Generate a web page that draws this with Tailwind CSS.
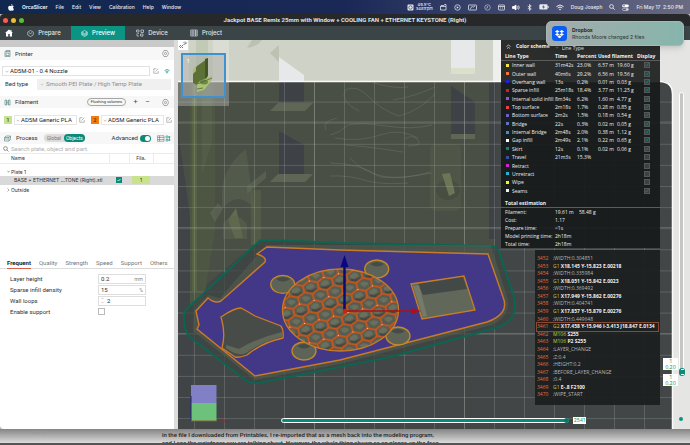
<!DOCTYPE html>
<html lang="en">
<head>
<meta charset="utf-8">
<title>OrcaSlicer</title>
<script src="https://cdn.jsdelivr.net/npm/@tailwindcss/browser@4"></script>
</head>
<body class="flex h-screen min-h-0 flex-col overflow-hidden bg-[#b9b9b9] font-['Inter','Liberation_Sans',sans-serif] text-[5px] leading-[8px] text-[#303030]">

<!-- system menu bar -->
<header class="flex h-[14px] shrink-0 items-center bg-linear-to-r from-[#10284f] via-[#1b2857] via-50% to-[#6a6b83] font-medium text-[#e6e9f2]">
  <nav class="flex items-center gap-[8px] pl-[8px]" aria-label="Menu bar">
    <svg class="h-[7px] w-[6px]" viewBox="0 0 12 14" fill="#f4f6fa"><path d="M8.7 0c.1 1.400-1.200 2.900-2.700 2.900C5.900 1.500 7.200.1 8.700 0zM6.200 3.900c.7 0 1.500-.7 2.800-.7 1 0 2 .5 2.600 1.400-2.300 1.300-1.900 4.600.4 5.500-.5 1.400-1.700 3.600-3 3.600-1 0-1.300-.6-2.500-.6s-1.600.6-2.500.6C2.300 13.700.2 10.400.2 7.500c0-2.800 1.800-4.200 3.500-4.200 1.100 0 1.900.6 2.500.6z"/></svg>
    <a href="#" class="font-bold">OrcaSlicer</a>
    <a href="#">File</a><a href="#">Edit</a><a href="#">View</a><a href="#">Calibration</a><a href="#">Help</a><a href="#">Window</a>
  </nav>
  <div class="ml-auto flex items-center gap-[7px] pr-[7px]">
    <div class="flex items-center gap-[2px]">
      <svg class="size-[7px]" viewBox="0 0 14 14"><rect x="1" y="1" width="12" height="12" rx="2" fill="#e6e9f2"/><circle cx="7" cy="7" r="3.500" fill="none" stroke="#334" stroke-width="1.300"/></svg>
      <div class="text-center text-[4px] leading-[4px]">49.5°C<br>3481rpm</div>
    </div>
    <svg class="size-[7px]" viewBox="0 0 14 14" fill="none" stroke="#e6e9f2" stroke-width="1.500"><path d="M1 5h11v7H1zM1 5l1-2h6l1-2h3v4"/></svg>
    <svg class="size-[7px]" viewBox="0 0 14 14" fill="none" stroke="#e6e9f2" stroke-width="1.500"><circle cx="7" cy="7" r="5.500"/><path d="M5.500 4.500l4 2.500-4 2.500z" fill="#e6e9f2" stroke="none"/></svg>
    <svg class="h-[7px] w-[9px]" viewBox="0 0 18 14" fill="none" stroke="#e6e9f2" stroke-width="1.500"><rect x="1" y="2" width="16" height="10" rx="1"/><path d="M4 10c2 0 2-5 4-5s1 3 6-1"/></svg>
    <svg class="size-[7px]" viewBox="0 0 14 14" fill="none" stroke="#c4c8d8" stroke-width="1.300"><circle cx="7" cy="7" r="5.500"/><path d="M7 4v3.500l-3 1"/></svg>
    <svg class="h-[7px] w-[7px]" viewBox="0 0 14 14" fill="none" stroke="#e6e9f2" stroke-width="1.500"><rect x="1" y="2" width="12" height="10" rx="1"/><path d="M1 5h12M4 8h2m2 0h2"/></svg>
    <svg class="h-[7px] w-[8px]" viewBox="0 0 16 14" fill="none" stroke="#fff" stroke-width="1.500"><path d="M1 5h3l4-3v10L4 9H1z" fill="#fff"/><path d="M10.500 4.500q2 2.500 0 5M13 3q3 4 0 8"/></svg>
    <svg class="h-[7px] w-[5px]" viewBox="0 0 10 14" fill="none" stroke="#fff" stroke-width="1.400"><path d="M1.500 4l7 6L5 13V1l3.500 3-7 6"/></svg>
    <svg class="h-[6px] w-[10px]" viewBox="0 0 20 12"><rect x=".7" y=".7" width="16.500" height="10.500" rx="2.500" fill="#e6e9f2"/><path d="M9.500 2L6 6.500h3L8 10l4-4.500H9z" fill="#334"/><path d="M18.500 4v4" stroke="#fff" stroke-width="1.500"/></svg>
    <svg class="h-[7px] w-[8px]" viewBox="0 0 16 14" fill="none" stroke="#fff" stroke-width="1.800"><path d="M1 5q7-6 14 0M3.500 8q4.500-4 9 0"/><circle cx="8" cy="11" r="1.500" fill="#fff" stroke="none"/></svg>
    <span>Doug Joseph</span>
    <svg class="size-[6px]" viewBox="0 0 12 12" fill="none" stroke="#fff" stroke-width="1.500"><circle cx="5" cy="5" r="3.800"/><path d="M8 8l3.500 3.500"/></svg>
    <svg class="h-[7px] w-[7px]" viewBox="0 0 14 14"><rect x=".5" y="1" width="13" height="5.500" rx="2.700" fill="#fff"/><circle cx="4" cy="3.700" r="1.500" fill="#555"/><rect x="1" y="8.500" width="12" height="4.500" rx="2.200" fill="none" stroke="#fff"/><circle cx="10" cy="10.700" r="1.700" fill="#fff"/></svg>
    <span>Fri May 17&nbsp; 2:50 PM</span>
  </div>
</header>

<div class="relative flex min-h-0 flex-1 flex-col">
  <!-- application title bar -->
  <div class="relative flex h-[12px] shrink-0 items-center justify-center rounded-t-[4px] bg-[#262829] font-['Roboto',sans-serif] text-[6px] font-bold text-[#dfe2e3]">
    <div class="absolute left-[3px] flex gap-[3px]"><i class="size-[5px] rounded-full bg-[#fc5b57]"></i><i class="size-[5px] rounded-full bg-[#e5bf3c]"></i><i class="size-[5px] rounded-full bg-[#57c038]"></i></div>
    <h1>Jackpot BASE Remix 25mm with Window + COOLING FAN + ETHERNET KEYSTONE (Right)</h1>
  </div>

  <nav class="flex h-[14px] shrink-0 items-stretch bg-[#3b4446] text-[6px] font-medium text-[#e3e6e7]" aria-label="Views">
    <button class="flex w-[17px] items-center justify-center" aria-label="Home"><svg class="size-[8px]" viewBox="0 0 16 16" fill="#fff"><path d="M8 1L0 8h2v7h4.500v-5h3v5H14V8h2l-3-2.700V2h-2v1.500z"/></svg></button>
    <button class="flex w-[54px] items-center justify-center gap-[4px]"><svg class="size-[7px]" viewBox="0 0 14 14" fill="none" stroke="#dde" stroke-width="1.200"><path d="M7 1l5.500 3v6L7 13 1.500 10V4zM4 5.500L7 7l3-1.500"/></svg>Prepare</button>
    <button class="flex w-[54px] items-center justify-center gap-[4px] bg-[#0b9483] text-white"><svg class="size-[7px]" viewBox="0 0 14 14" fill="none" stroke="#d4f0ea" stroke-width="1.200"><path d="M7 1l5.500 3v6L7 13 1.500 10V4zM1.500 6L7 9l5.500-3M1.500 8L7 11l5.500-3M1.500 4L7 7l5.500-3"/></svg>Preview</button>
    <button class="flex w-[54px] items-center justify-center gap-[4px]"><svg class="size-[8px]" viewBox="0 0 16 16" fill="none" stroke="#dde" stroke-width="1.300"><path d="M1 2h5v4H1zM10 2h5v5h-5zM2 9v5h4M9 10h5v4H9zM3 9h3M12 14v1"/></svg>Device</button>
    <button class="flex w-[54px] items-center justify-center gap-[4px]"><svg class="size-[8px]" viewBox="0 0 16 16" fill="none" stroke="#dde" stroke-width="1.300"><path d="M1.500 2h13v12h-13zM1.500 6h13M1.500 10h13M6 2v12M11 2v12"/></svg>Project</button>
  </nav>

  <div class="flex min-h-0 flex-1">
    <!-- settings sidebar -->
    <aside class="flex w-[178px] shrink-0 flex-col overflow-hidden rounded-bl-[4px] border-r-[4px] border-[#dcdcdc] bg-white font-['Roboto',sans-serif]">
      <div class="h-[7px] shrink-0 bg-[#c9c9c9]"></div>
      <section>
        <h2 class="flex h-[13px] items-center gap-[4px] bg-[#f7f7f7] pr-[5px] pl-[4px] text-[6px]">
          <svg class="size-[7px]" viewBox="0 0 14 14" fill="none" stroke="#4e7d78" stroke-width="1.200"><path d="M2 3h10v10H2zM4 3V1h8v2M4 6h6v5H4z"/></svg>Printer
          <button class="ml-auto" aria-label="Printer settings"><svg class="size-[7px]" viewBox="0 0 14 14" fill="none" stroke="#6b6b6b" stroke-width="1.100"><path d="M4 1h6l3.500 6L10 13H4L.5 7z"/><circle cx="7" cy="7" r="2.200"/></svg></button>
        </h2>
        <div class="mt-[6px] flex h-[10px] items-center gap-[3px] pr-[4px] pl-[2px]">
          <label class="flex h-[10px] flex-1 items-center border border-[#e2e2e2] pl-[2px]"><svg class="mr-[1px] h-[3px] w-[4px]" viewBox="0 0 8 5" fill="none" stroke="#888"><path d="M1 1l3 3 3-3"/></svg>
            <select aria-label="Printer" class="flex-1 appearance-none bg-transparent text-[6px] leading-[8px] text-[#222]"><option>AD5M-01 - 0.4 Nozzle</option></select></label>
          <button aria-label="Edit printer"><svg class="size-[6px]" viewBox="0 0 12 12" fill="none" stroke="#777"><path d="M7 1.500H1.500v9h9V6M5 7l5.500-5.500"/></svg></button>
          <svg class="ml-[2px] size-[6px]" viewBox="0 0 12 12" fill="none" stroke="#0b9483" stroke-width="1.400"><path d="M1 5q5-4 10 0M3 7.500q3-2.500 6 0"/><circle cx="6" cy="9.500" r=".8"/></svg>
        </div>
        <div class="mt-[2px] flex h-[12px] items-center pr-[3px] pl-[5px]">
          <label for="plate-type" class="w-[32px] text-[6px]">Bed type</label>
          <div class="flex h-[11px] flex-1 items-center bg-[#f0f0f0] pl-[3px]"><svg class="mr-[2px] h-[3px] w-[4px]" viewBox="0 0 8 5" fill="none" stroke="#aaa"><path d="M1 1l3 3 3-3"/></svg>
            <select id="plate-type" class="flex-1 appearance-none bg-transparent text-[6px] leading-[8px] text-[#8f8f8f]"><option>Smooth PEI Plate / High Temp Plate</option></select></div>
        </div>
      </section>
      <section class="mt-[6px]">
        <h2 class="flex h-[12px] items-center bg-[#f7f7f7] pr-[5px] pl-[4px] text-[6px]">
          <svg class="mr-[4px] size-[7px]" viewBox="0 0 14 14" fill="none" stroke="#4e7d78" stroke-width="1.200"><path d="M2 2h3v10H2zM9 2h3v10H9zM5 4h4M5 7h4M5 10h4"/></svg>Filament
          <button class="mr-[7px] ml-auto h-[8px] rounded-full border border-[#a5a5a5] px-[3px] text-[4px] leading-[6px]">Flushing volumes</button>
          <button class="w-[5px] text-[8px] text-[#555]" aria-label="Add filament">+</button><button class="ml-[7px] w-[5px] text-[8px] text-[#555]" aria-label="Remove filament">−</button>
          <button class="ml-[12px]" aria-label="Filament settings"><svg class="size-[7px]" viewBox="0 0 14 14" fill="none" stroke="#6b6b6b" stroke-width="1.100"><path d="M4 1h6l3.500 6L10 13H4L.5 7z"/><circle cx="7" cy="7" r="2.200"/></svg></button>
        </h2>
        <div class="mt-[7px] grid grid-cols-2 gap-[6px] pr-[2px] pl-[4px]">
          <div class="flex h-[10px] items-center gap-[2px]"><b class="flex size-[8px] items-center justify-center bg-[#c9e38c] font-medium">1</b>
            <label class="flex h-[10px] min-w-0 flex-1 items-center border border-[#e6e6e6] pl-[1px]"><svg class="mr-[1px] h-[3px] w-[4px]" viewBox="0 0 8 5" fill="none" stroke="#888"><path d="M1 1l3 3 3-3"/></svg><select aria-label="Filament 1" class="min-w-0 flex-1 appearance-none bg-transparent text-[6px] leading-[8px] text-[#222]"><option>AD5M Generic PLA</option></select></label>
            <svg class="size-[6px]" viewBox="0 0 12 12" fill="none" stroke="#777"><path d="M7 1.500H1.500v9h9V6M5 7l5.500-5.500"/></svg></div>
          <div class="flex h-[10px] items-center gap-[2px]"><b class="flex size-[8px] items-center justify-center bg-[#f57c0c] font-medium">2</b>
            <label class="flex h-[10px] min-w-0 flex-1 items-center border border-[#e6e6e6] pl-[1px]"><svg class="mr-[1px] h-[3px] w-[4px]" viewBox="0 0 8 5" fill="none" stroke="#888"><path d="M1 1l3 3 3-3"/></svg><select aria-label="Filament 2" class="min-w-0 flex-1 appearance-none bg-transparent text-[6px] leading-[8px] text-[#222]"><option>AD5M Generic PLA</option></select></label>
            <svg class="size-[6px]" viewBox="0 0 12 12" fill="none" stroke="#777"><path d="M7 1.500H1.500v9h9V6M5 7l5.500-5.500"/></svg></div>
        </div>
      </section>
      <section class="mt-[7px]">
        <h2 class="flex h-[12px] items-center bg-[#f7f7f7] pr-[3px] pl-[4px] text-[6px]">
          <svg class="mr-[5px] size-[7px]" viewBox="0 0 14 14" fill="none" stroke="#4e7d78" stroke-width="1.200"><path d="M4 2h9v7l-3 3H1V5zM1 5h9v7M10 5l3-3M2 8h7"/></svg>Process
          <span class="ml-[6px] flex h-[8px] items-center rounded-full bg-[#dcdcdc] text-[5px] leading-[6px]"><button class="px-[3px] text-[#777]">Global</button><button class="h-[8px] rounded-full bg-[#0b8a7a] px-[2px] text-white">Objects</button></span>
          <label for="adv" class="ml-auto">Advanced</label>
          <input id="adv" type="checkbox" checked class="peer sr-only"><span class="ml-[2px] flex h-[7px] w-[11px] justify-end rounded-full bg-[#0b8a7a] p-[1px]"><i class="size-[5px] rounded-full bg-white"></i></span>
          <svg class="ml-[6px] h-[7px] w-[14px]" viewBox="0 0 28 14" fill="none" stroke="#777" stroke-width="1.200"><path d="M1 1.500h13v11H1zM1 5h13M1 9h13M5 1.500v11"/><path stroke="#0b9483" d="M18 2h4v4h-4zM25 2v10M18 9h4v3h-4zM22 4h5M22 10h5"/></svg>
        </h2>
        <label class="flex h-[10px] items-center gap-[2px] border-b border-[#ececec] pl-[3px]"><svg class="size-[6px]" viewBox="0 0 12 12" fill="none" stroke="#555" stroke-width="1.300"><circle cx="5" cy="5" r="3.700"/><path d="M8 8l3 3"/></svg><input aria-label="Search" placeholder="Search plate, object and part." class="flex-1 text-[6px] leading-[8px] placeholder:text-[#b0b0b0]"></label>
        <table class="w-full table-fixed border-collapse text-left font-['Inter',sans-serif] text-[5px] leading-[8px]">
          <thead><tr class="h-[9px] border-b border-[#ececec]"><th class="w-[109px] py-0 pl-[11px] font-normal">Name</th><th class="w-[20px] border-x border-[#ececec] p-0"></th><th class="w-[24px] border-r border-[#ececec] p-0 text-center font-normal">Fila.</th><th class="p-0"></th></tr></thead>
          <tbody>
            <tr class="h-[12px]"><td colspan="4" class="p-0 pt-[4px] pl-[7px]"><span class="flex items-center gap-[1px]"><svg class="h-[3px] w-[3px]" viewBox="0 0 6 5" fill="none" stroke="#555"><path d="M1 1l2 3 2-3"/></svg>Plate 1</span></td></tr>
            <tr class="h-[9px] bg-[#d9d9d9]"><td class="p-0 pl-[14px] whitespace-nowrap">BASE + ETHERNET ...TONE (Right).stl</td><td class="p-0"><input type="checkbox" checked aria-label="Printable" class="peer sr-only"><span class="mx-auto flex size-[6px] items-center justify-center bg-[#0b8a7a]"><svg class="size-[4px]" viewBox="0 0 8 8" fill="none" stroke="#fff" stroke-width="1.500"><path d="M1 4l2 2 4-4"/></svg></span></td><td class="p-0"><span class="mx-auto block w-[18px] bg-[#c9e38c] text-center">1</span></td><td class="p-0"></td></tr>
            <tr class="h-[11px]"><td colspan="4" class="p-0 pl-[7px]"><span class="flex items-center gap-[1px]"><svg class="h-[4px] w-[3px]" viewBox="0 0 6 8" fill="none" stroke="#555"><path d="M1 1l3 3-3 3"/></svg>Outside</span></td></tr>
          </tbody>
        </table>
      </section>
      <section class="mt-[63px] text-[6px]">
        <nav class="flex h-[10px] items-start gap-[8px] border-b border-[#dcdcdc] pl-[7px] text-[#777]">
          <a href="#" class="h-[10px] border-b border-[#d9604a] font-bold text-[#222]">Frequent</a><a href="#">Quality</a><a href="#">Strength</a><a href="#">Speed</a><a href="#">Support</a><a href="#">Others</a>
        </nav>
        <div class="mt-[5px] grid grid-cols-[88px_48px] gap-y-[1px] pl-[10px]">
          <label for="lh" class="leading-[10px]">Layer height</label><span class="flex h-[10px] items-center border border-[#dedede] px-[2px]"><input id="lh" value="0.2" class="w-0 flex-1"><small class="text-[5px] text-[#888]">mm</small></span>
          <label for="sd" class="leading-[10px]">Sparse infill density</label><span class="flex h-[10px] items-center border border-[#dedede] px-[2px]"><input id="sd" value="15" class="w-0 flex-1"><small class="text-[5px] text-[#888]">%</small></span>
          <label for="wl" class="leading-[10px]">Wall loops</label><span class="flex h-[10px] items-center border border-[#dedede] px-[2px]"><svg class="mr-[3px] h-[7px] w-[3px]" viewBox="0 0 6 14" fill="none" stroke="#999"><path d="M1 4l2-2 2 2M1 10l2 2 2-2"/></svg><input id="wl" value="2" class="w-0 flex-1"></span>
          <label for="es" class="leading-[10px]">Enable support</label><span class="flex items-center"><input id="es" type="checkbox" class="size-[7px] appearance-none border border-[#bbb]"></span>
        </div>
      </section>
    </aside>

    <!-- 3D preview -->
    <main class="relative min-w-0 flex-1 overflow-hidden bg-[#e5e6e4]">
      <svg class="absolute inset-0 size-full" viewBox="178 40 512 389" preserveAspectRatio="xMinYMin slice" role="img" aria-label="Sliced model preview">
        <defs>
          <clipPath id="bed-clip"><path d="M178 81H660Q672 81 672 94V429H178z"/></clipPath>
          <pattern id="hex" width="15" height="20" patternUnits="userSpaceOnUse" patternTransform="translate(340 311) rotate(-14)"><rect width="15" height="20" fill="#565c50"/><path d="M3 8l5-2 3 2v3l-5 1-3-1zM-5-1l5-2 4 2v2l-5 2zM10-1l5-2 5 2v2l-5 2zM-5 18l5-1 4 2v2h-5zM10 18l5-1 4 2v2h-5z" fill="#69705f"/><path d="M3 11l4 2 6-1v2l-6 2-4-2z" fill="#41473f"/><path d="M7.500 0V3.300L0 6.700V13.300L7.500 16.700V20M7.500 3.300L15 6.700V13.300L7.500 16.700" fill="none" stroke="#c9561c" stroke-width="1.900"/><circle cx="7.500" cy="3.500" r=".6" fill="#ffe3d0"/></pattern>
          <pattern id="grid" x="194" y="80.500" width="30" height="21.100" patternUnits="userSpaceOnUse"><path d="M.5 0V21.100M0 .5H30" stroke="#a0aaa0" stroke-opacity=".35" stroke-width=".8" fill="none"/></pattern>
        </defs>
        <path d="M178 40H494V82H178z" fill="#cfd2c7"/>
        <path d="M189 40h24v42h-24z" fill="#bfc6b0"/><path d="M196 40h12v42h-12z" fill="#adb89c"/>
        <path d="M252 40h10q-5 7-15 8zM270 53l9-8v17z" fill="#bcc2b1"/>
        <path d="M279 46v36h25V75L279 57z" fill="#cfd2c7"/><path d="M279 57v25h25V75z" fill="#e7e8ea"/><path d="M451 40h24v28h-24z" fill="#e7e8ea"/><path d="M451 68h24v6h-24z" fill="#dcdfcb"/><path d="M493 40h8v42h-8z" fill="#eeeeec"/>
        <g clip-path="url(#bed-clip)">
          <path d="M178 81H690V429H178z" fill="#434647"/>
          <path d="M178 81H496V235L494 250 260 240 200 290 180 225z" fill="#4a4f45"/>
          <path d="M178 130l14 100v190h-14z" fill="#404447"/>
          <path d="M190 81h25v150l-12 75h-13z" fill="#4d5543"/><path d="M192 81h5v210h-5z" fill="#5f6f3f" opacity=".5"/><path d="M202 81h10v60l-10 35z" fill="#59664a" opacity=".4"/>
          <path d="M279 81v21h25V81zM279 131v44h25v-30zM451 86l24 16v32h-24z" fill="#3e4247"/>
          <path d="M278 103h35l-8 8h-35zM278 174h35l-8 8h-35zM451 134h24v5h-24z" fill="#5f6655"/>
          <path d="M222 192q1-25 24-43l8 60q-15-20-32 0z" fill="#596250" opacity=".6"/><path d="M247 186l19-15v7l-19 16zM210 213l8-10 5 6-8 13z" fill="#66705b" opacity=".5"/><path d="M251 190h10v55h-10z" fill="#5b6848" opacity=".5"/><path d="M228 220l8-12 7 30h-8z" fill="#7b885a" opacity=".5"/><path d="M223 224q11-16 24 0v15h-24z" fill="#5c654f" opacity=".5"/>
          <rect x="430" y="144" width="31" height="67" rx="6" fill="#535b49" opacity=".6"/><ellipse cx="448" cy="190" rx="12" ry="10" fill="#434940" opacity=".6"/><path d="M442 174l8-1 5 20-6 3z" fill="#6b7657"/>
          <g fill="none" stroke="#838b76" stroke-width=".6" opacity=".5"><path d="M345 90q12-6 24 7t30 19q20-5 36-22M345 90q-5 12 14 21M330 135q10-2 18-10 12-3 38 1t46-1M335 138q25 4 45-3t38 3M346 145q26 2 57 7M350 158q28 30 80 14M330 163q30 0 50 14 20 2 52-4M330 176q20-1 38 5 14 4 40 2M326 130q-5-8 11-12M374 83q20 6 34 4M393 100q20-3 42-13M405 139q8-5 13 1t-10 6"/></g>
          <path d="M489 81h7v158h-7z" fill="#3e4245"/>
          <path d="M178 81H690V429H178z" fill="url(#grid)"/>
          <path d="M314.500 81V429M464.500 81V429M178 122H690M178 227.500H690M178 333.500H690" stroke="#a5ada5" stroke-opacity=".3"/>
        </g>
        <path d="M178 81.500H660Q672.500 82 672.500 94V429" fill="none" stroke="#fafafa" stroke-width="1.500"/>
        <!-- skirt, first layer and openings -->
        <path d="M260 240.500H284L340 243 490 246Q497 246 499 252L514 297Q519 319 499 327L390 357 340 367 258 383Q250 384 244 379L190 337Q183 331 184 314 184 310 189 307z" fill="#3d4542" fill-opacity=".7" stroke="#0c6550" stroke-width="2"/>
        <path d="M266 245H491L507 297Q512 315 492 325L340 364 255 380 193 331 194 310 208 295 220 298z" fill="#61695a" fill-opacity=".35"/>
        <path d="M267 247L340 250 488 254 503 297Q510 314 487 322L340 360 255 376 197 329 199 325 196 311 208 298Q215 304 221 301L265 262Q267 257 257 254z" fill="#433888" stroke="#c97c25" stroke-width="1.400"/>
        <path d="M221 317Q234 308 241 308 247 311 255 316L281 326Q284 330 283 338 263 342 247 355 239 358 235 357L222 348Q226 333 221 317z" fill="#484c49" stroke="#cf7d22" stroke-width="1.300"/>
        <path d="M226 345l13 4q18-11 43-17v5q-19 4-36 16-8 4-20-5z" fill="#616859"/>
        <path d="M411 284L464 276 475 310 422 319z" fill="#61685a" stroke="#c97c25" stroke-width="1.300"/><path d="M418 284l45-7 4 12-44 6z" fill="#434947"/><path d="M413 286l6-1 8 31-4 1z" fill="#747b68"/>
        <g stroke="#c58a24" stroke-width="1.300" fill="#5d6356"><ellipse cx="282.700" cy="284.300" rx="12" ry="9"/><ellipse cx="304" cy="351" rx="12" ry="9"/><ellipse cx="376.700" cy="269" rx="12" ry="9"/><ellipse cx="398" cy="336" rx="12" ry="9"/></g>
        <g fill="#454b47"><path d="M276 279q7-4 14 0-7 5-14 0zM297 346q7-4 14 0-7 5-14 0zM370 264q7-4 14 0-7 5-14 0zM391 331q7-4 14 0-7 5-14 0z"/></g>
        <ellipse cx="340.500" cy="310" rx="58" ry="41" fill="url(#hex)" stroke="#c97c25" stroke-width="1.300"/>
        <!-- axes -->
        <path d="M344.500 311V266" stroke="#0b0b72" stroke-width="2.500"/><path d="M344.500 255l4 12h-8z" fill="#08087c"/><path d="M344.500 311H412" stroke="#a81414" stroke-width="1.400"/><path d="M421 311l-10-3v6z" fill="#b50d12"/><circle cx="345" cy="311" r="2.200" fill="#c21"/>
        <path d="M191 385h25.500v18H191z" fill="#8180c6"/><path d="M191 403h25.500v18H191z" fill="#6cc27b"/><path d="M191 396v25" stroke="#1e2480"/><path d="M191 421h26" stroke="#8e5a2a"/><path d="M222 420l3 2m0-2l-3 2" stroke="#a22" stroke-width=".7"/>
      </svg>

      <!-- plate thumbnail -->
      <div class="absolute top-0 left-0 h-[66px] w-[51px] bg-white/25"></div>
      <button class="absolute top-0 left-0 flex h-[10px] w-[10px] items-center justify-center bg-white" aria-label="Collapse sidebar"><svg class="size-[8px]" viewBox="0 0 16 16" fill="none" stroke="#333" stroke-width="1.300"><path d="M4 8l-3 3 3 3M8 8l-3 3 3 3M9 2l3 3-3 3M12 1l3 3-3 3"/></svg></button>
      <button class="absolute top-[13px] left-[3px] h-[45px] w-[45px] border-2 border-[#3f92cf] bg-[#a5a8a2]/50" aria-label="Plate 1">
        <span class="absolute top-[2px] left-[4px] text-white">1</span>
        <svg class="size-full" viewBox="0 0 41 41"><path d="M10 16l4-5 10-7v20l-8 7-6-3z" fill="#5d7137"/><path d="M22 4l3-1v18l-3 3z" fill="#435628"/><path d="M10 14l3-2v4l-3 3z" fill="#a8bd74"/><path d="M17 26l12-5v4l-8 10-7 2v-8z" fill="#a9c277"/><ellipse cx="21" cy="27" rx="4" ry="2.500" fill="#6f8647"/><path d="M14 29l15-6M14 34l6-1" stroke="#53682d" fill="none" stroke-width=".8"/></svg>
      </button>

      <!-- legend -->
      <section class="absolute top-0 right-[30px] h-[208px] w-[159px] bg-[#161818]/90 font-['Open_Sans',sans-serif] text-[5px] font-medium text-[#eef0f0]">
        <div class="flex h-[12px] items-center pl-[5px] font-bold"><svg class="mr-[5px] size-[5px]" viewBox="0 0 10 10" fill="none" stroke="#ddd" stroke-width="1.500"><path d="M1 5l4-3 4 3M2 9l3-2 3 2"/></svg>Color scheme<label class="ml-[5px] flex h-[9px] flex-1 items-center self-end font-normal"><svg class="mr-[3px] h-[3px] w-[4px]" viewBox="0 0 8 5" fill="none" stroke="#aaa"><path d="M1 1l3 3 3-3"/></svg><select aria-label="Color scheme" class="flex-1 appearance-none"><option>Line Type</option></select></label></div>
        <table class="h-[143px] w-full table-fixed border-collapse text-left leading-[8px] whitespace-nowrap [&_td]:p-0 [&_th]:p-0">
          <colgroup><col class="w-[54px]"><col class="w-[22px]"><col class="w-[21px]"><col class="w-[19px]"><col class="w-[20px]"><col></colgroup>
          <thead><tr class="border-b border-[#5b5d5d]"><th><span class="pl-[4px]">Line Type</span></th><th>Time</th><th>Percent</th><th colspan="2">Used filament</th><th>Display</th></tr></thead>
          <tbody id="legend"></tbody>
        </table>
        <h3 class="mt-[4px] border-b border-[#5b5d5d] pl-[4px] font-bold">Total estimation</h3>
        <dl class="grid grid-cols-[50px_1fr] pl-[4px]">
          <dt>Filament:</dt><dd>19.61 m <span class="pl-[4px]">58.48 g</span></dd><dt>Cost:</dt><dd>1.17</dd><dt>Prepare time:</dt><dd>&lt;1s</dd><dt class="whitespace-nowrap">Model printing time:</dt><dd>2h18m</dd><dt>Total time:</dt><dd>2h18m</dd>
        </dl>
      </section>

      <!-- g-code listing -->
      <section class="absolute top-[210px] right-[30px] h-[155px] w-[125px] bg-[#1b1d1d]/90 pt-[5px] pl-[2px] font-['Open_Sans',sans-serif] text-[5px] font-bold whitespace-nowrap text-[#eef0f0]">
        <ol id="gcode" class="grid h-[144px] auto-rows-fr leading-[7px]"></ol>
      </section>

      <!-- layer slider -->
      <div class="absolute top-[52px] right-[6px] h-[280px] w-[5px] rounded-full border border-white bg-[#c4c6c6]"></div>
      <div class="absolute top-[328px] right-[5px] flex h-[8px] w-[6px] flex-col items-center justify-between rounded-full bg-[#0b8a7a] py-[1px]"><i class="h-[1px] w-[3px] bg-white"></i><i class="h-[1px] w-[3px] bg-white"></i></div>
      <output class="absolute top-[318px] right-[12px] w-[15px] bg-white text-center leading-[6px] text-[#279c52]">1<br>0.20</output>
      <output class="absolute top-[334px] right-[12px] w-[15px] bg-white text-center leading-[6px] text-[#279c52]">1<br>0.20</output>
      <i class="absolute top-[377px] right-[7px] size-[4px] rounded-full bg-[#0b9483]"></i>

      <!-- move slider -->
      <div class="absolute right-[121px] bottom-[6px] left-[103px] h-[5px] rounded-full border border-white bg-[#0b8a7a]"><i class="absolute top-[-1px] right-[-1px] size-[5px] rounded-full bg-[#0a7467]"></i></div>
      <output class="absolute right-[104px] bottom-[5px] bg-white px-[1px] leading-[7px] text-[#279c52]">2541</output>
    </main>
  </div>

  <!-- notification -->
  <aside class="absolute top-[7px] right-[6px] flex h-[25px] w-[138px] items-center rounded-[5px] border border-[#a9b6b6] bg-linear-to-r from-[#a3abab] to-[#86b5ac] pl-[5px] text-[5px] leading-[7px] text-[#1f2929] shadow-md">
    <svg class="mr-[5px] size-[15px]" viewBox="0 0 30 30"><rect width="30" height="30" rx="7" fill="#0b5cf2"/><path d="M10.500 8l4.500 3-4.500 3L6 11zM19.500 8l4.500 3-4.500 3-4.500-3zM10.500 14l4.500 3-4.500 3L6 17zM19.500 14l4.500 3-4.500 3-4.500-3zM15 18.500l4.500 3-4.500 3-4.500-3z" fill="#fff"/></svg>
    <div><b>Dropbox</b><p class="text-[#273333]">Rhonda Moore changed 2 files</p></div>
  </aside>
</div>

<!-- page behind the window -->
<footer class="flex h-[16px] shrink-0 overflow-hidden border-b-2 border-[#555] bg-linear-to-b from-[#858585] to-[#dcdcdc] text-[6px] leading-[8px] text-[#252525]">
  <div class="w-[150px] pl-[32px] text-[5px] leading-[7px] text-[#999]">Home</div>
  <p class="flex-1 pt-[2px] pl-[12px] font-['Roboto',sans-serif] font-medium whitespace-nowrap">in the file I downloaded from Printables, I re-imported that as a mesh back into the modeling program,<br>and I see the weirdness you are talking about. However, the whole thing shown as an planes on the face</p>
</footer>

<script>
const rows = [
 ["#f2e53c","Inner wall","31m42s","23.0%","6.57 m","19.60 g",1],["#f07634","Outer wall","40m6s","29.2%","6.56 m","19.56 g",1],["#2020d8","Overhang wall","13s","0.2%","0.01 m","0.03 g",1],["#c3272a","Sparse infill","25m18s","18.4%","3.77 m","11.25 g",1],["#9a54d2","Internal solid infill","8m34s","6.2%","1.60 m","4.77 g",1],["#ef4144","Top surface","2m18s","1.7%","0.28 m","0.85 g",1],["#6f5dc8","Bottom surface","2m2s","1.5%","0.18 m","0.54 g",1],["#5a75c0","Bridge","22s","0.3%","0.02 m","0.05 g",1],["#4789ca","Internal Bridge","2m48s","2.0%","0.38 m","1.12 g",1],["#ffffff","Gap infill","2m49s","2.1%","0.22 m","0.65 g",1],["#118471","Skirt","12s","0.1%","0.02 m","0.06 g",1],["#384f9e","Travel","21m3s","15.3%","","",0],["#cf25cf","Retract","","","","",0],["#25b3d0","Unretract","","","","",0],["#f4f22d","Wipe","","","","",0],["#f0f0f4","Seams","","","","",1]];
document.getElementById("legend").innerHTML = rows.map(([c,...r]) => `<tr><td><span class="flex items-center gap-[3px] pl-[5px]"><i class="size-[3px] shrink-0" style="background:${c}"></i>${r[0]}</span></td>${r.slice(1,5).map(t=>`<td>${t}</td>`).join("")}<td><input type="checkbox" aria-label="${r[0]}" class="sr-only" ${r[5]?"checked":""}><span class="ml-[7px] flex size-[6px] items-center justify-center border border-[#545858] bg-[#3c4141]">${r[5]?'<svg class="size-[4px]" viewBox="0 0 8 8" fill="none" stroke="#159080" stroke-width="1.500"><path d="M1 4l2 2 4-5"/></svg>':""}</span></td></tr>`).join("");
const code = [";WIDTH:0.304851","G1 X18.145 Y-15.823 E.00218",";WIDTH:0.335984","G1 X18.051 Y-15.842 E.0023",";WIDTH:0.369492","G1 X17.949 Y-15.862 E.00276",";WIDTH:0.404741","G1 X17.857 Y-15.879 E.00276",";WIDTH:0.449648","G2 X17.458 Y-15.946 I-3.413 J18.847 E.0134","M106 S255","M106 P2 S255",";LAYER_CHANGE",";Z:0.4",";HEIGHT:0.2",";BEFORE_LAYER_CHANGE",";0.4","G1 E-.8 F2100",";WIPE_START"];
document.getElementById("gcode").innerHTML = code.map((l,i) => {
  const [op,...rest] = l.split(" ");
  const body = l[0]===";" ? `<span class="font-medium text-[#b3b7b7]">${l}</span>` : `<span class="font-medium text-[#c3cc3a]">${op}</span> ${rest.join(" ")}`;
  return `<li class="${i===9?"outline outline-[#874a33] mr-[2px]":""}"><span class="inline-block w-[16px] font-medium text-[#e0703f]">${3452+i}</span>${body}</li>`;
}).join("");
</script>
</body>
</html>
